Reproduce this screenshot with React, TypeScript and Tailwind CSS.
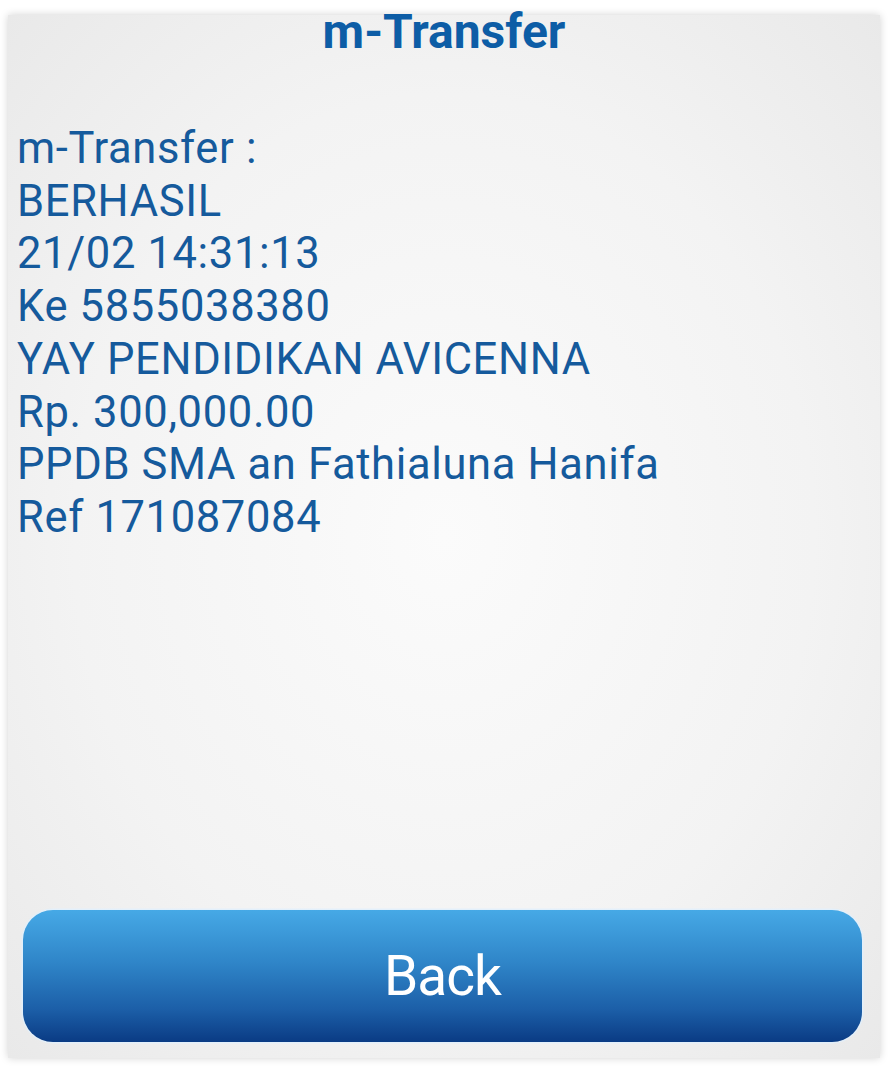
import React from "react";

export default function App() {
  const lines = [
    "m-Transfer :",
    "BERHASIL",
    "21/02 14:31:13",
    "Ke 5855038380",
    "YAY PENDIDIKAN AVICENNA",
    "Rp. 300,000.00",
    "PPDB SMA an Fathialuna Hanifa",
    "Ref 171087084",
  ];
  return (
    <div className="w-[891px] h-[1075px] bg-white pt-[15px] pb-[17px] pl-[8px] pr-[11px]" style={{ fontFamily: "Roboto, 'Liberation Sans', sans-serif" }}>
      <div className="h-full flex flex-col shadow-[0_0_8px_rgba(0,0,0,0.18)] bg-[radial-gradient(ellipse_at_center,#fbfbfb_0%,#f3f3f3_60%,#e9e9e9_100%)]">
        <div className="h-0 relative">
          <div className="absolute left-0 right-0 top-[-13px] text-center text-[48px] font-bold text-[#0d5da6] leading-[60px]">m-Transfer</div>
        </div>
        <div className="pt-[108px] pl-[9px] text-[#155a9c] text-[43.5px] leading-[52.7px] tracking-[0.65px]">
          {lines.map((l) => (
            <div key={l}>{l}</div>
          ))}
        </div>
        <div className="flex-1" />
        <div className="pl-[15px] pr-[18px] pb-[16px]">
          <div className="h-[132px] rounded-[30px] shadow-[0_0_0_1.5px_rgba(225,240,252,0.9)] bg-[linear-gradient(to_bottom,#46a9e6_0%,#2f85c8_40%,#1c5fa8_75%,#0a3b84_100%)] flex items-center justify-center">
            <span className="text-white text-[55px] tracking-[-1px]">Back</span>
          </div>
        </div>
      </div>
    </div>
  );
}
